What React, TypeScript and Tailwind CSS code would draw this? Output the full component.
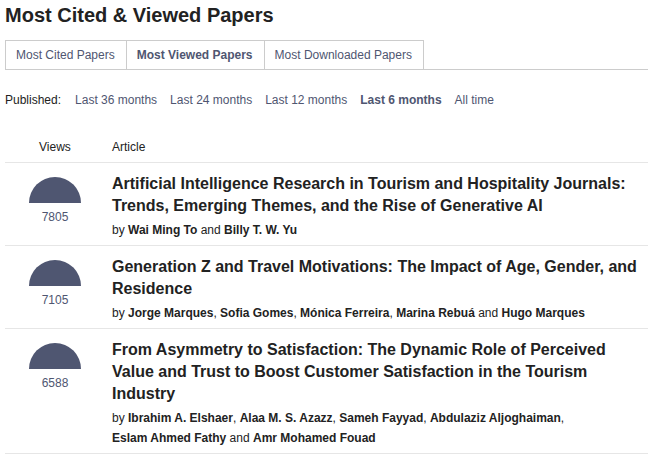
import React from "react";

type Author = string;

const papers: { views: number; title: string; authors: Author[] }[] = [
  {
    views: 7805,
    title:
      "Artificial Intelligence Research in Tourism and Hospitality Journals: Trends, Emerging Themes, and the Rise of Generative AI",
    authors: ["Wai Ming To", "Billy T. W. Yu"],
  },
  {
    views: 7105,
    title: "Generation Z and Travel Motivations: The Impact of Age, Gender, and Residence",
    authors: ["Jorge Marques", "Sofia Gomes", "Mónica Ferreira", "Marina Rebuá", "Hugo Marques"],
  },
  {
    views: 6588,
    title:
      "From Asymmetry to Satisfaction: The Dynamic Role of Perceived Value and Trust to Boost Customer Satisfaction in the Tourism Industry",
    authors: [
      "Ibrahim A. Elshaer",
      "Alaa M. S. Azazz",
      "Sameh Fayyad",
      "Abdulaziz Aljoghaiman",
      "Eslam Ahmed Fathy",
      "Amr Mohamed Fouad",
    ],
  },
];

const tabs = ["Most Cited Papers", "Most Viewed Papers", "Most Downloaded Papers"];
const periods = ["Last 36 months", "Last 24 months", "Last 12 months", "Last 6 months", "All time"];

function Authors({ names }: { names: Author[] }) {
  return (
    <div className="mt-[3px] text-[12px] leading-[20px] text-[#222] max-w-[476px]">
      by{" "}
      {names.map((n, i) => (
        <React.Fragment key={n}>
          <b className="font-bold">{n}</b>
          {i < names.length - 2 ? ", " : i === names.length - 2 ? " and " : ""}
        </React.Fragment>
      ))}
    </div>
  );
}

export default function App() {
  return (
    <div className="w-[654px] h-[456px] overflow-hidden bg-white font-['Liberation_Sans',Arial,sans-serif] text-[#222]">
      <div className="pl-[5px] pr-[6px]">
        <h1 className="pt-[3px] text-[20px] leading-[24px] font-bold text-[#222]">
          Most Cited &amp; Viewed Papers
        </h1>

        <div className="mt-[13px] flex border-b border-[#ccc]">
          {tabs.map((t, i) => (
            <div
              key={t}
              className={
                "h-[29px] flex items-center pl-[10px] pr-[11px] text-[12px] border-t border-r border-[#ccc] " +
                (i === 0 ? "border-l " : "") +
                (i === 1 ? "font-bold text-[#4f5671]" : "text-[#4f5671]")
              }
            >
              {t}
            </div>
          ))}
        </div>

        <div className="mt-[23px] flex items-center text-[12px] leading-[14px]">
          <span className="text-[#222] mr-[14px]">Published:</span>
          <div className="flex gap-[13px]">
            {periods.map((p) => (
              <span
                key={p}
                className={p === "Last 6 months" ? "font-bold text-[#4f5671]" : "text-[#4f5671]"}
              >
                {p}
              </span>
            ))}
          </div>
        </div>

        <div className="mt-[30px] flex text-[12px] leading-[20px] pb-[5px] border-b border-[#e6e6e6]">
          <div className="w-[107px] pl-[34px]">Views</div>
          <div>Article</div>
        </div>

        {papers.map((p) => (
          <div key={p.views} className="flex border-b border-[#e6e6e6] pt-[10px] pb-[5px]">
            <div className="w-[100px] flex flex-col items-center pt-[4px] shrink-0">
              <div className="w-[52px] h-[26px] rounded-t-full bg-[#4f5671]" />
              <div className="mt-[6px] text-[12px] leading-[16px] text-[#4f5671]">{p.views}</div>
            </div>
            <div className="pl-[7px]">
              <div className="text-[16px] leading-[22px] font-bold text-[#222] pr-[10px]">{p.title}</div>
              <Authors names={p.authors} />
            </div>
          </div>
        ))}
      </div>
    </div>
  );
}
